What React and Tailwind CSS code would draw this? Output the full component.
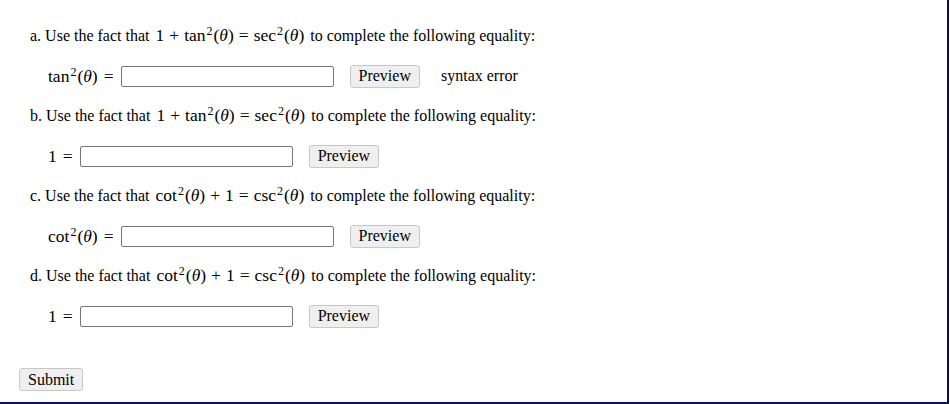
import React from 'react';

const serif = { fontFamily: '"Liberation Serif", "Times New Roman", serif' };

function Sq({ fn }) {
  return (
    <span className="whitespace-nowrap font-['Liberation_Serif',serif]">
      {fn}
      <sup className="text-[12px] ml-[1px] mr-[1px]">2</sup>
      (<i>θ</i>)
    </span>
  );
}

function Op({ children }) {
  return <span className="mx-[5px]">{children}</span>;
}

function Fact({ kind }) {
  if (kind === 'tan') {
    return (
      <span className="text-[17.5px] mx-[2px] font-['Liberation_Serif',serif]">
        1<Op>+</Op>
        <Sq fn="tan" />
        <Op>=</Op>
        <Sq fn="sec" />
      </span>
    );
  }
  return (
    <span className="text-[17.5px] mx-[2px] font-['Liberation_Serif',serif]">
      <Sq fn="cot" />
      <Op>+</Op>1<Op>=</Op>
      <Sq fn="csc" />
    </span>
  );
}

function Question({ letter, kind, lhs, error }) {
  return (
    <div className="flex flex-col">
      <p className="h-5 leading-5 text-[16px] text-black whitespace-nowrap">
        {letter}. Use the fact that <Fact kind={kind} /> to complete the following equality:
      </p>
      <div className="flex items-center h-6 mt-[19px] pl-[18px]">
        <span className="text-[17.5px] whitespace-nowrap font-['Liberation_Serif',serif]">
          {lhs === '1' ? '1' : <Sq fn={lhs} />}
          <span className="ml-[6px]">=</span>
        </span>
        <input
          type="text"
          className="ml-[7px] w-[213px] h-[21px] border border-[#767676] rounded-[2px] bg-white outline-none"
        />
        <button className="ml-[16px] h-[23px] px-[8px] text-[16px] leading-none bg-[#efefef] border border-[#c8c8c8] rounded-[3px]">
          Preview
        </button>
        {error && <span className="ml-[21px] text-[16px]">syntax error</span>}
      </div>
    </div>
  );
}

export default function App() {
  return (
    <div
      className="w-[949px] h-[404px] bg-white border-r-2 border-b-2 border-[#0b0b6b] pl-[19px] pt-[25px] text-black"
      style={serif}
    >
      <div className="flex flex-col gap-[17px] pl-[11px]">
        <Question letter="a" kind="tan" lhs="tan" error />
        <Question letter="b" kind="tan" lhs="1" />
        <Question letter="c" kind="cot" lhs="cot" />
        <Question letter="d" kind="cot" lhs="1" />
      </div>
      <button className="mt-[40px] h-[23px] px-[8px] text-[16px] leading-none bg-[#efefef] border border-[#c8c8c8] rounded-[3px]">
        Submit
      </button>
    </div>
  );
}
